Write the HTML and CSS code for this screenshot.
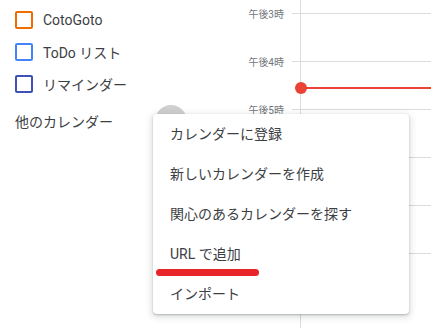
FILE: index.html
```html
<!DOCTYPE html>
<html lang="ja">
<head>
    <meta charset="UTF-8">
    <meta name="viewport" content="width=device-width, initial-scale=1.0">
    <title>カレンダー</title>
    <link rel="stylesheet" href="styles.css">
</head>
<body>
    <div class="app">
        <div class="sidebar">
            <div class="cal-item">
                <span class="check orange"></span>
                <span class="cal-name">CotoGoto</span>
            </div>
            <div class="cal-item">
                <span class="check blue"></span>
                <span class="cal-name">ToDo リスト</span>
            </div>
            <div class="cal-item">
                <span class="check indigo"></span>
                <span class="cal-name">リマインダー</span>
            </div>
            <div class="other-head">
                <span class="other-title">他のカレンダー</span>
                <span class="add-btn"></span>
            </div>
        </div>
        <div class="gutter">
            <div class="hour"><span class="hour-label">午後3時</span><span class="tick"></span></div>
            <div class="hour"><span class="hour-label">午後4時</span><span class="tick"></span></div>
            <div class="hour"><span class="hour-label">午後5時</span><span class="tick"></span></div>
            <!-- the later labels sit under the open menu -->
            <div class="hour"><span class="tick"></span></div>
            <div class="hour"><span class="tick"></span></div>
            <div class="hour"><span class="tick"></span></div>
        </div>
        <div class="day">
            <div class="slot"></div>
            <div class="slot"></div>
            <div class="slot"></div>
            <div class="slot"></div>
            <div class="slot"></div>
            <div class="slot"></div>
            <div class="now-line"><span class="now-dot"></span></div>
        </div>
    </div>

    <div class="menu">
        <div class="menu-item">カレンダーに登録</div>
        <div class="menu-item">新しいカレンダーを作成</div>
        <div class="menu-item">関心のあるカレンダーを探す</div>
        <div class="menu-item">URL で追加</div>
        <div class="menu-item">インポート</div>
    </div>
    <div class="marker"></div>
</body>
</html>
```

FILE: styles.css
```css
* {
    box-sizing: border-box;
}
body {
    margin: 0;
    font-family: Roboto, "Noto Sans CJK JP", sans-serif;
    color: #3c4043;
    background: #fff;
    overflow: hidden;
}
.app {
    display: flex;
    height: 328px;
    overflow: hidden;
}
.sidebar {
    width: 240px;
    padding: 4px 0 0 15px;
}
.cal-item {
    display: flex;
    align-items: center;
    height: 32px;
}
.check {
    width: 18px;
    height: 18px;
    border: 2px solid;
    border-radius: 2px;
    margin-right: 10px;
}
.orange { border-color: #ef6c00; }
.blue { border-color: #4285f4; }
.indigo { border-color: #3f51b5; }
.cal-name {
    font-size: 14px;
}
.other-head {
    display: flex;
    align-items: center;
    height: 32px;
    margin-top: 5px;
}
.other-title {
    font-size: 14px;
    color: #3c4043;
}
.add-btn {
    width: 32px;
    height: 32px;
    border-radius: 50%;
    background: #cfcfcf;
    margin-left: 42px;
}
.gutter {
    width: 60px;
    padding-top: 13px;
}
.hour {
    display: flex;
    justify-content: flex-end;
    height: 48px;
}
.hour-label {
    font-size: 10px;
    line-height: 12px;
    color: #70757a;
    margin-top: -4px;
    margin-right: 8px;
}
.tick {
    width: 8px;
    height: 0;
    border-top: 1px solid #dadce0;
}
.day {
    flex: 1;
    position: relative;
    border-left: 1px solid #dadce0;
    padding-top: 13px;
}
.slot {
    height: 48px;
    border-top: 1px solid #dadce0;
}
.now-line {
    position: absolute;
    left: 0;
    right: 0;
    top: 87px;
    height: 2px;
    background: #ea4335;
}
.now-dot {
    position: absolute;
    left: -6px;
    top: -5px;
    width: 12px;
    height: 12px;
    border-radius: 50%;
    background: #ea4335;
}
.menu {
    position: absolute;
    left: 153px;
    top: 114px;
    width: 256px;
    background: #fff;
    border-radius: 4px;
    box-shadow: 0 2px 6px 2px rgba(60, 64, 67, 0.15), 0 1px 2px rgba(60, 64, 67, 0.3);
}
.menu-item {
    height: 40px;
    line-height: 40px;
    padding-left: 17px;
    font-size: 14px;
    color: #3c4043;
}
.marker {
    position: absolute;
    left: 156px;
    top: 269px;
    width: 103px;
    height: 7px;
    border-radius: 4px;
    background: #e8232a;
}
```
